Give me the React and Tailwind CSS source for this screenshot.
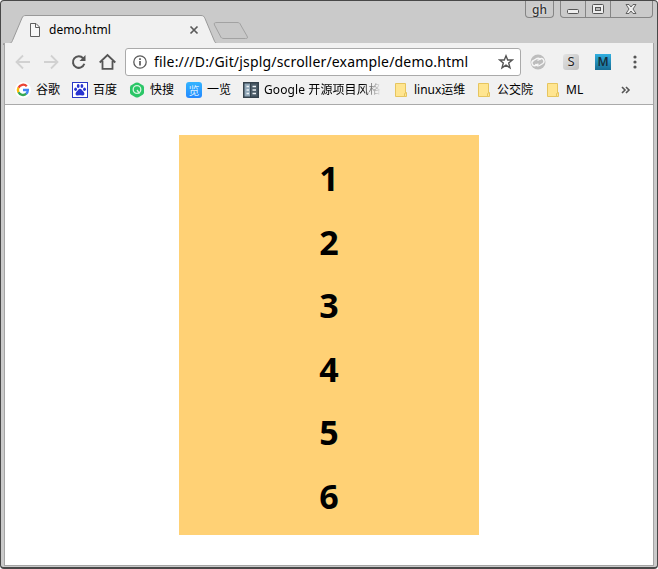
import React from 'react';

const UI = "font-['Noto_Sans','Noto_Sans_CJK_SC',sans-serif]";

function TabStrip() {
  return (
    <div className="relative flex h-[43px] items-start">
      <svg className="absolute -left-px top-0" width="658" height="45" viewBox="0 0 658 45" fill="none">
        <path d="M3.500 45V43.500H9C11 43.500 11.500 42.500 12.500 40.500L22 18C23 16 23.500 15.500 26 15.500H201C203.500 15.500 204 16.500 205 18.500L214 40C215 42.500 215.500 43.500 218 43.500H653.500V45" fill="#f1f1f1" stroke="#999" />
        <path d="M217 22.500H237C239 22.500 240 23 240.700 25L247 36C248 38 247.500 38.500 245.500 38.500H224C222 38.500 221 38 220.300 36L214.500 25C213.800 23 214.500 22.500 217 22.500Z" fill="#c8c8c8" stroke="#a2a2a2" />
        <path d="M30.500 23.500H36L39.500 27V36.500H30.500Z" fill="#f8f8f8" stroke="#5f5f5f" />
        <path d="M35.500 23.500V27.500H39.500" stroke="#5f5f5f" />
        <path d="M190.500 26.500L197.500 33.500M197.500 26.500L190.500 33.500" stroke="#5a5a5a" strokeWidth="1.700" />
      </svg>
      <span className="relative ml-[48px] mt-[20px] whitespace-nowrap text-[12px] leading-[20px] text-black">demo.html</span>
      <WindowButtons />
    </div>
  );
}

function WindowButtons() {
  return (
    <div className="relative ml-auto mr-[4px] flex h-[18px] gap-[6px]">
      <div className="flex w-[29px] items-center justify-center rounded-b-[4px] border border-t-0 border-[#858585] bg-[#cacaca] pt-[3px] text-[12px] font-medium leading-none text-[#333] [text-shadow:0_0_2px_#fff]">gh</div>
      <div className="flex w-[93px] rounded-b-[4px] border border-t-0 border-[#858585] bg-[#cacaca]">
        <div className="flex w-[25px] items-center justify-center border-r border-[#858585]">
          <svg width="13" height="17" viewBox="0 0 13 17"><rect x=".5" y="9.500" width="11" height="4" rx="1" fill="#eee" stroke="#555" /></svg>
        </div>
        <div className="flex w-[25px] items-center justify-center border-r border-[#858585]">
          <svg width="13" height="17" viewBox="0 0 13 17" fill="#eee" stroke="#555"><rect x=".5" y="4.500" width="11" height="9" rx="1" /><rect x="3.500" y="7.500" width="5" height="3" fill="#bbb" /></svg>
        </div>
        <div className="flex flex-1 items-center justify-center">
          <svg width="13" height="17" viewBox="0 0 13 17"><path d="M1 4.500H4L6 7L8 4.500H11L8 9L11 13.500H8L6 11L4 13.500H1L4 9Z" fill="#eee" stroke="#555" strokeWidth=".9" /></svg>
        </div>
      </div>
    </div>
  );
}

function AddressBar() {
  return (
    <div className="flex h-[37px] items-center">
      <svg className="ml-[10px] shrink-0" width="105" height="18" viewBox="0 0 105 18" fill="none" strokeWidth="1.800">
        <g stroke="#d1d1d1"><path d="M15 9H2M8 2.500L1.500 9L8 15.500" /><path d="M29 9H42M36 2.500L42.500 9L36 15.500" /></g>
        <g stroke="#555" strokeWidth="2">
          <path d="M68.200 5.300A5.800 5.800 0 1 0 69.300 10.800" />
          <path d="M70.500 2V8H64.500Z" fill="#555" stroke="none" />
          <path d="M84.700 9.500L92.500 2L100.300 9.500M87.500 8V15.800H97.500V8" strokeWidth="1.800" />
        </g>
      </svg>
      <div className="ml-[5px] flex h-[28px] w-[396px] shrink-0 items-center rounded-[3px] border border-[#aaa] bg-white">
        <svg className="ml-[7px] shrink-0" width="14" height="14" viewBox="0 0 14 14" fill="none" stroke="#5a5a5a"><circle cx="7" cy="7" r="6.200" strokeWidth="1.300" /><path d="M7 6V10.500M7 3.300V4.900" strokeWidth="1.700" /></svg>
        <span className="ml-[7px] whitespace-nowrap text-[14px] leading-[20px] tracking-[0.18px] text-black">file:///D:/Git/jsplg/scroller/example/demo.html</span>
        <svg className="ml-auto mr-[6px] shrink-0" width="16" height="16" viewBox="0 0 16 16" fill="none" stroke="#555" strokeWidth="1.400"><path d="M8 1.800L9.700 6H14.300L10.700 9L12 13.800L8 11.100L4 13.800L5.300 9L1.700 6H6.300Z" /></svg>
      </div>
      <svg className="ml-[9px] shrink-0" width="16" height="16" viewBox="0 0 16 16" fill="none">
        <circle cx="8" cy="8" r="7.500" fill="#bdbdbd" />
        <path d="M8.500 10L5.500 11.500A2.700 2.700 0 0 1 3.500 6.500L7 4.500A2.700 2.700 0 0 1 10.500 6M7.500 6.500L10.500 4.700A2.700 2.700 0 0 1 12.800 9.500L9.500 11.500A2.700 2.700 0 0 1 5.500 9.800" stroke="#f6f6f6" strokeWidth="1.400" />
      </svg>
      <div className="ml-[17px] flex h-[16px] w-[16px] shrink-0 items-center justify-center rounded-[3px] bg-gradient-to-br from-[#e4e4e4] to-[#bebebe] text-[13px] leading-none text-[#222] [text-shadow:0_0_2px_#fff]">S</div>
      <div className="ml-[16px] flex h-[16px] w-[16px] shrink-0 items-center justify-center bg-gradient-to-b from-[#31afe0] to-[#176d94] text-[12px] font-semibold leading-none text-[#16303c]">M</div>
      <svg className="ml-[22px] shrink-0" width="4" height="14" viewBox="0 0 4 14" fill="#555"><circle cx="2" cy="2" r="1.600" /><circle cx="2" cy="7" r="1.600" /><circle cx="2" cy="12" r="1.600" /></svg>
    </div>
  );
}

function GoogleIcon() {
  return <svg width="16" height="16" viewBox="0 0 16 16"><circle cx="8" cy="8" r="8" fill="#fff" /><g fill="none" strokeWidth="2.300"><path d="M11.800 4.300A5 5 0 0 0 3.500 5.800" stroke="#ea4335" /><path d="M3.500 5.600A5 5 0 0 0 3.500 10.400" stroke="#fbbc05" /><path d="M3.500 10.200A5 5 0 0 0 11.300 11.700" stroke="#34a853" /><path d="M11.200 11.800A5 5 0 0 0 12.900 8H8" stroke="#4285f4" /></g></svg>;
}

function PawIcon() {
  return <svg width="16" height="16" viewBox="0 0 16 16"><rect x=".5" y=".5" width="15" height="15" fill="#fff" stroke="#2a38c6" /><g fill="#2733d0"><ellipse cx="3.600" cy="7.300" rx="1.400" ry="1.800" /><ellipse cx="6.200" cy="4" rx="1.400" ry="1.900" /><ellipse cx="9.900" cy="4" rx="1.400" ry="1.900" /><ellipse cx="12.500" cy="7.300" rx="1.400" ry="1.800" /><path d="M8 6.800C9.500 6.800 10 8.500 11.500 9.800C13.500 12 12 14 10 13.500C8.500 13.200 7.500 13.200 6 13.500C4 14 2.500 12 4.500 9.800C6 8.500 6.500 6.800 8 6.800Z" /></g></svg>;
}

function SearchIcon() {
  return <svg width="16" height="16" viewBox="0 0 16 16"><path d="M6.500 .8Q8 0 9.500 .8L13.700 3.200Q15 4 15 5.500V10.500Q15 12 13.700 12.800L9.500 15.200Q8 16 6.500 15.200L2.300 12.800Q1 12 1 10.500V5.500Q1 4 2.300 3.200Z" fill="#2bc667" /><circle cx="8" cy="7.500" r="3.800" fill="none" stroke="#d6f5e1" strokeWidth="1.300" /><path d="M8 8L10.500 11.500" stroke="#d6f5e1" strokeWidth="1.300" /></svg>;
}

function DocsIcon() {
  return <svg width="16" height="16" viewBox="0 0 16 16"><rect width="16" height="16" fill="#35424c" /><path d="M1.500 1.500H7V14.500H1.500Z" fill="#8fa6b7" /><path d="M8 1.500H14.500V14.500H8Z" fill="#4c5c68" /><path d="M3.500 4.500H6M3.500 8H6M3.500 11.500H6M9.500 4.500H13M9.500 8H13M9.500 11.500H13" stroke="#edf2f5" strokeWidth="1.700" /></svg>;
}

function Folder() {
  return <svg width="13" height="16" viewBox="0 0 13 16" fill="#ffe590" stroke="#e6c55f"><path d="M1.500 1.500H11.500V14.500H1.500Z" /><path d="M10.500 14.500V11.500L12.500 10.500V14.500Z" /></svg>;
}

function Bookmark({ icon, className, textClass, children }) {
  return (
    <div className={'flex shrink-0 items-center ' + className}>
      {icon}
      <span className={'whitespace-nowrap text-[12px] leading-[18px] text-black ' + textClass}>{children}</span>
    </div>
  );
}

function BookmarksBar() {
  return (
    <div className="flex h-[25px] items-start border-b border-[#aaa] pl-[10px] pt-px">
      <Bookmark icon={<GoogleIcon />} className="w-[57px]" textClass="ml-[5px]">谷歌</Bookmark>
      <Bookmark icon={<PawIcon />} className="w-[57px]" textClass="ml-[5px]">百度</Bookmark>
      <Bookmark icon={<SearchIcon />} className="w-[57px]" textClass="ml-[5px]">快搜</Bookmark>
      <Bookmark icon={<div className="flex h-[16px] w-[16px] items-center justify-center rounded-[3px] bg-gradient-to-b from-[#35b4ff] to-[#2588ff] text-[11px] leading-none text-[#d9eeff]">览</div>} className="w-[57px]" textClass="ml-[5px]">一览</Bookmark>
      <Bookmark icon={<DocsIcon />} className="w-[151px]" textClass="ml-[5px] tracking-[0.1px] [mask-image:linear-gradient(to_right,black_84%,transparent)]">Google 开源项目风格</Bookmark>
      <Bookmark icon={<Folder />} className="w-[83px]" textClass="ml-[7px]">linux运维</Bookmark>
      <Bookmark icon={<Folder />} className="w-[69px]" textClass="ml-[7px]">公交院</Bookmark>
      <Bookmark icon={<Folder />} className="w-[75px]" textClass="ml-[7px]">ML</Bookmark>
      <svg className="mt-[5px]" width="10" height="8" viewBox="0 0 10 8" fill="none" stroke="#555" strokeWidth="1.600"><path d="M1 1L4 4L1 7M5 1L8 4L5 7" /></svg>
    </div>
  );
}

export default function App() {
  return (
    <div className={'h-[569px] w-[658px] overflow-hidden bg-white ' + UI}>
      <div className="flex h-full flex-col overflow-hidden rounded-[4px] border border-b-2 border-[#484848] bg-[#cacaca]">
        <div className="-mt-px"><TabStrip /></div>
        <div className="relative mb-px ml-[3px] mr-[3px] flex min-h-0 flex-1 flex-col border-x border-b border-[#a5a5a5] bg-[#f1f1f1]">
          <AddressBar />
          <BookmarksBar />
          <main className="flex min-h-0 flex-1 justify-center bg-white pt-[30px]">
            <ol className="flex h-[400px] w-[300px] flex-col bg-[#ffd175] pt-[12px] text-center text-[34px] font-bold leading-[63.6px] text-black">
              {[1, 2, 3, 4, 5, 6].map((n) => <li key={n}>{n}</li>)}
            </ol>
          </main>
        </div>
      </div>
    </div>
  );
}
